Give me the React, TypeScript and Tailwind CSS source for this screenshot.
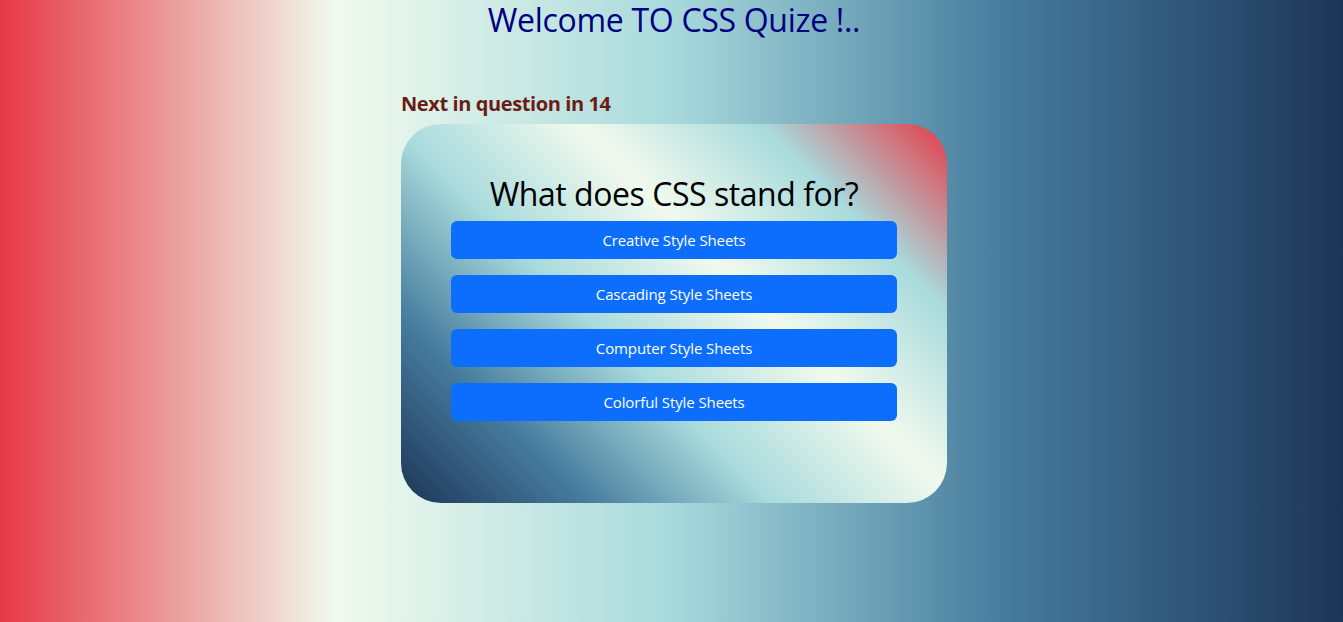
const options = [
  "Creative Style Sheets",
  "Cascading Style Sheets",
  "Computer Style Sheets",
  "Colorful Style Sheets",
];

export default function App() {
  return (
    <div
      className="min-h-[622px] w-full pl-[5px] bg-[linear-gradient(to_right,#e63946,#f1faee,#a8dadc,#457b9d,#1d3557)]"
      style={{ fontFamily: '"Open Sans", "Noto Sans", sans-serif' }}
    >
      <h1 className="text-center text-[32px] leading-[40px] text-[#000080] tracking-[-0.3px]">
        Welcome TO CSS Quize !..
      </h1>

      <div className="mx-auto mt-[52px] w-[546px]">
        <p className="text-[20px] leading-[24px] font-bold text-[#6b1d15] tracking-[-0.4px]">
          Next in question in 14
        </p>

        <div className="mt-[8px] rounded-[40px] px-[50px] pt-[51px] pb-[82px] bg-[linear-gradient(45deg,#1d3557,#457b9d,#a8dadc,#f1faee,#a8dadc,#e63946)]">
          <h2 className="mb-[8px] text-center text-[32px] leading-[38px] text-black tracking-[-0.45px]">
            What does CSS stand for?
          </h2>
          <div className="flex flex-col gap-[16px]">
            {options.map((o) => (
              <button
                key={o}
                className="h-[38px] w-full rounded-[6px] bg-[#0d6efd] text-[15px] text-white tracking-[-0.1px]"
              >
                {o}
              </button>
            ))}
          </div>
        </div>
      </div>
    </div>
  );
}
